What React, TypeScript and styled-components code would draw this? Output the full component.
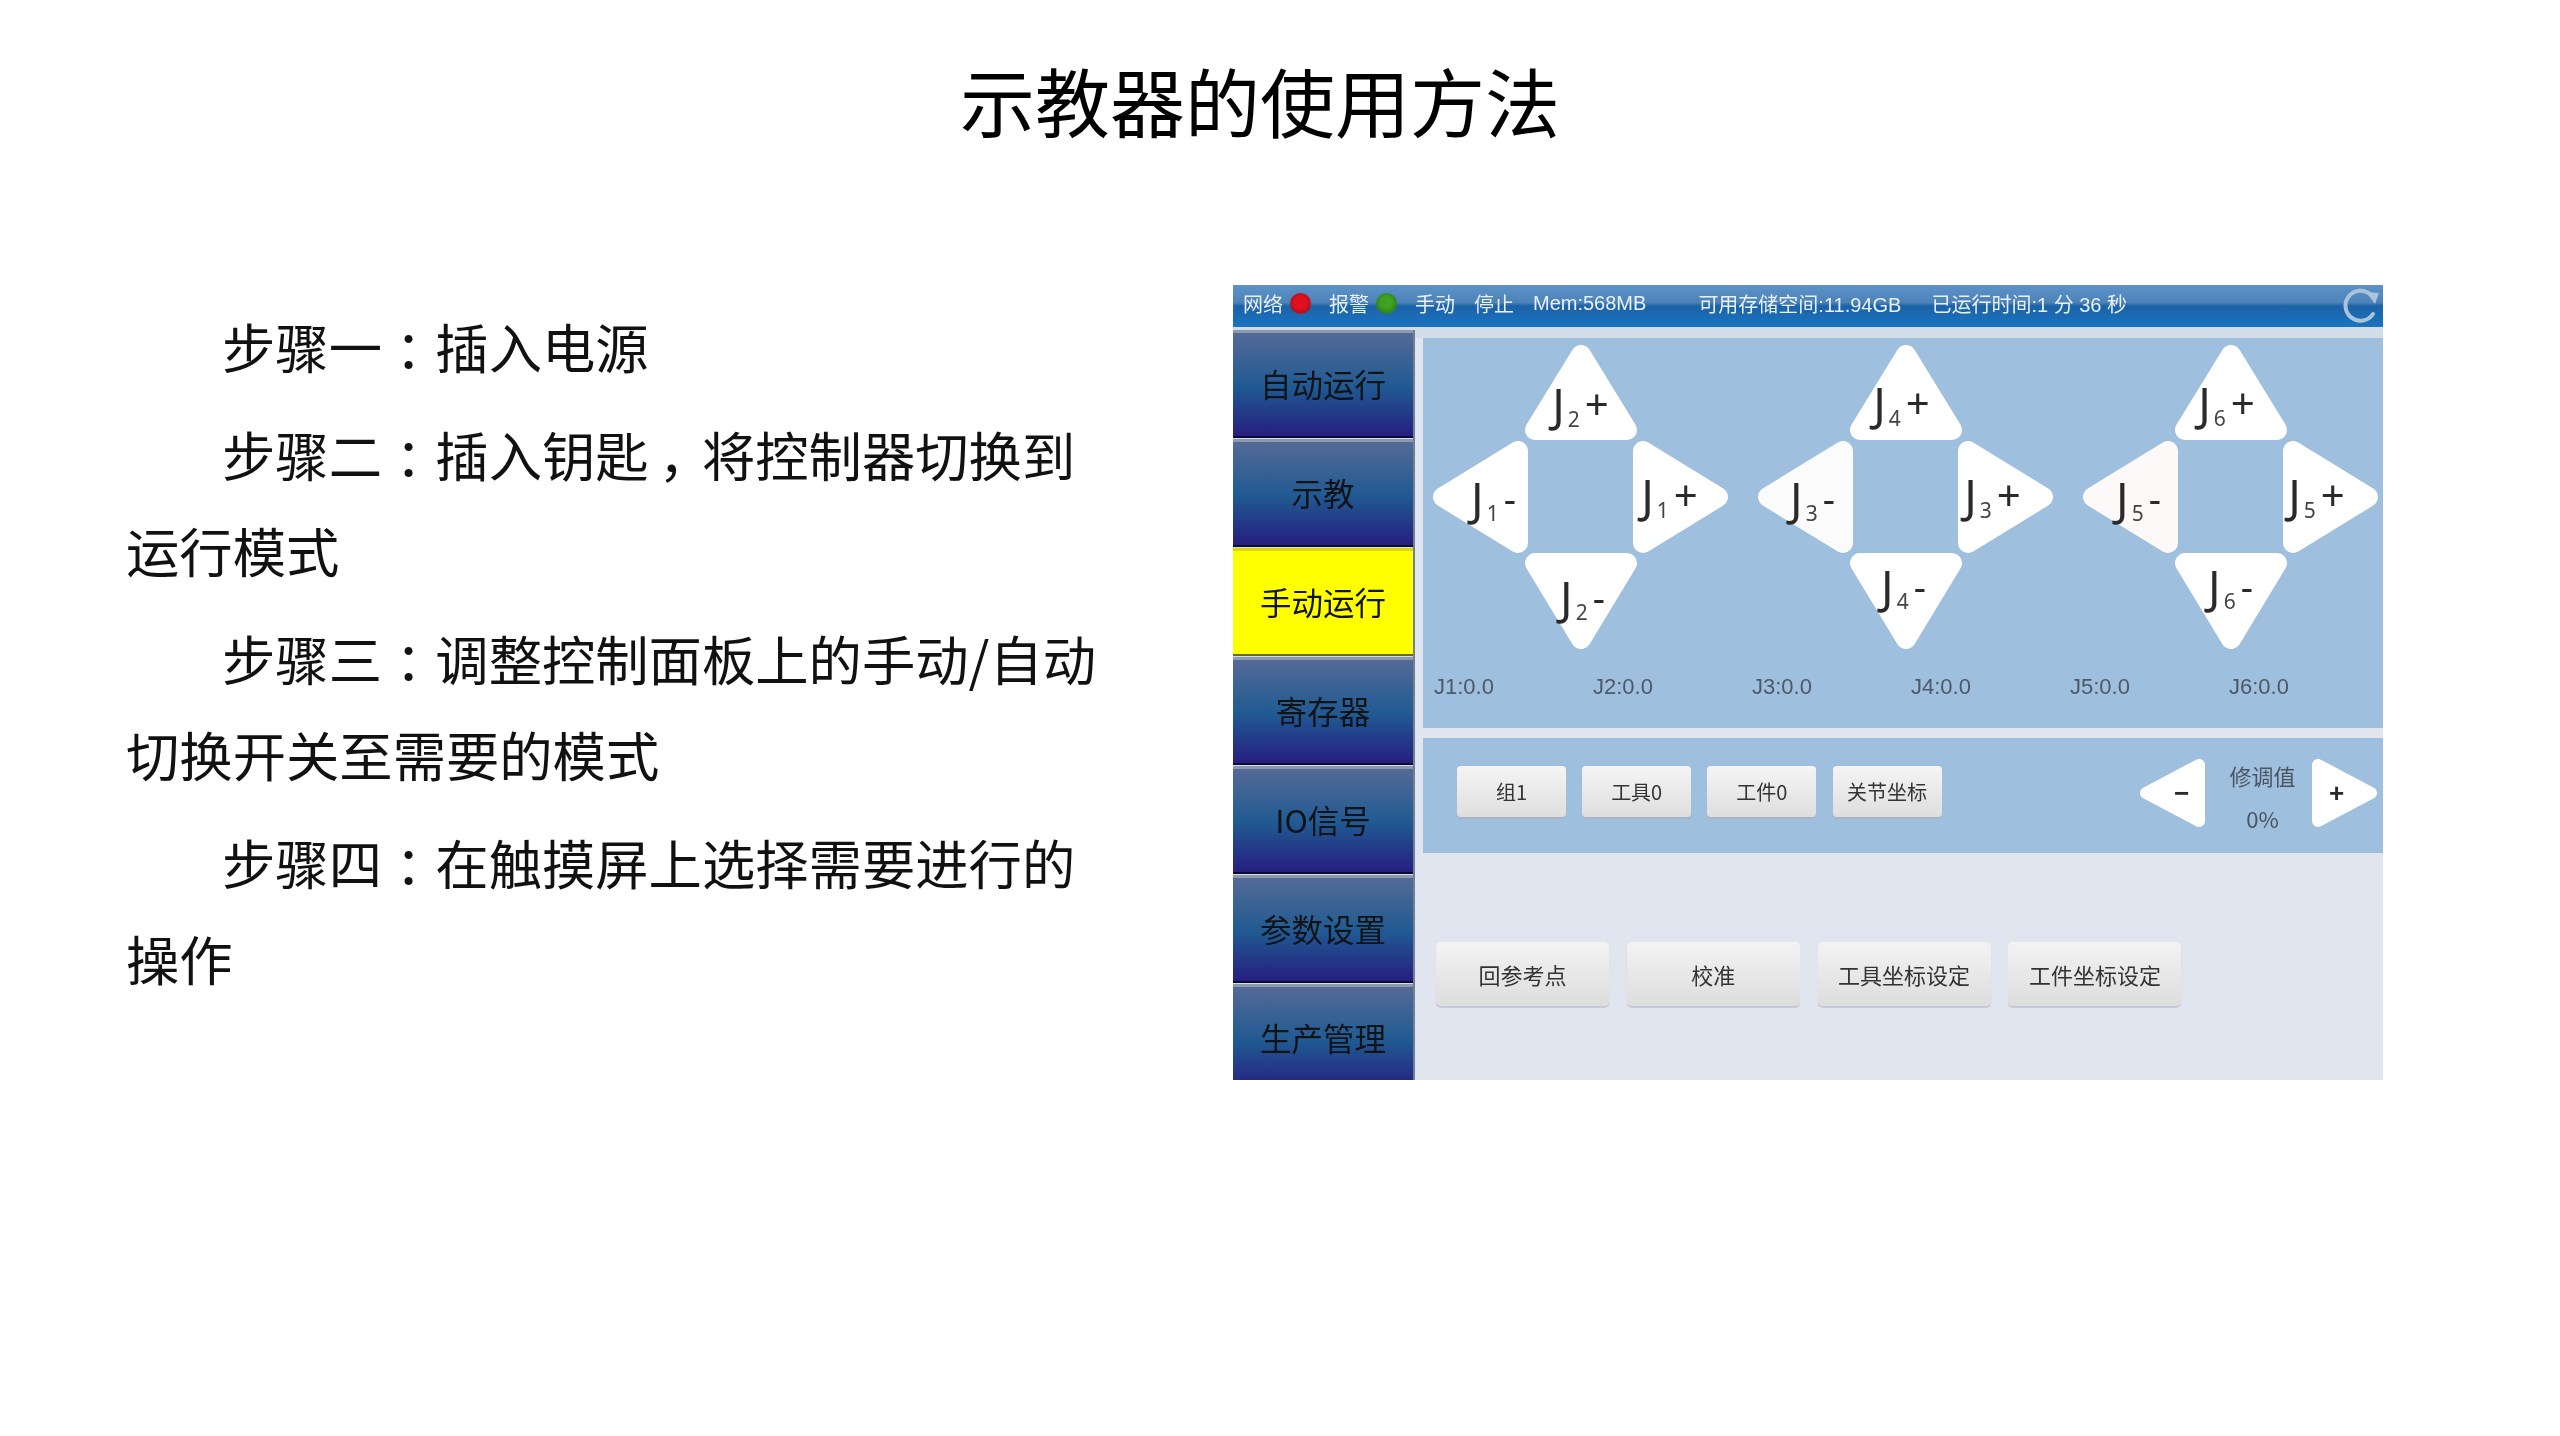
import React from "react"
import styled, { createGlobalStyle } from "styled-components"

const CJK = `"Noto Sans CJK SC", "Noto Sans", sans-serif`

const GlobalStyle = createGlobalStyle`
  html, body {
    margin: 0;
    padding: 0;
    background: #fff;
  }
`

const Slide = styled.div`
  width: 2560px;
  height: 1436px;
  overflow: hidden;
  background: #fff;
  font-family: ${CJK};
`

const Title = styled.h1`
  width: 2520px;
  margin: 0;
  padding-top: 50px;
  height: 100px;
  font-size: 75px;
  line-height: 100px;
  font-weight: 400;
  text-align: center;
  color: #000;
`

const Row = styled.div`
  display: flex;
  align-items: flex-start;
  margin-top: 135px;
  padding-left: 126px;
`

const Steps = styled.div`
  flex: 0 0 990px;
  margin-right: 117px;
  padding-top: 13px;
`

const Step = styled.p`
  margin: 0 0 12px;
  text-indent: 96px;
  font-size: 53.33px;
  line-height: 96px;
  color: #111;
`

// colon and comma sit in the middle of their cell on the slide
const Punct = styled.span`
  display: inline-block;
  width: 1em;
  text-indent: 0;
  text-align: center;
  font-feature-settings: "palt";
`

const Screen = styled.div`
  width: 1150px;
  height: 795px;
  overflow: hidden;
  display: flex;
  flex-direction: column;
  filter: blur(0.5px);
  font-family: ${CJK};
`

const StatusBar = styled.div`
  flex: 0 0 42px;
  position: relative;
  display: flex;
  align-items: center;
  padding: 0 0 5px 10px;
  box-sizing: border-box;
  font-family: "Liberation Sans", "Noto Sans CJK SC", sans-serif;
  font-size: 20px;
  color: #e8f0f8;
  background: linear-gradient(
    180deg,
    #5c93c8 0%,
    #4c82b8 42%,
    #1c62a6 50%,
    #1a74c2 100%
  );
`

const StatusItem = styled.span<{ $gap: number }>`
  margin-left: ${(p) => p.$gap}px;
  white-space: nowrap;
`

const Led = styled.span<{ $color: string; $dark: string }>`
  width: 21px;
  height: 21px;
  margin-left: 7px;
  border-radius: 50%;
  background: radial-gradient(circle at 50% 45%, ${(p) => p.$color} 35%, ${(p) => p.$dark} 100%);
`

const RefreshIcon = styled.svg`
  position: absolute;
  right: 3px;
  top: 2px;
`

const Body = styled.div`
  flex: 1;
  min-height: 0;
  display: flex;
  background: #d3dde9;
`

const Sidebar = styled.div`
  flex: 0 0 180px;
  display: flex;
  flex-direction: column;
  gap: 1px;
  margin-top: 3px;
  border-right: 2px solid #6f8096;
`

const NavButton = styled.div<{ $active?: boolean }>`
  flex: 0 0 108px;
  display: flex;
  align-items: center;
  justify-content: center;
  box-sizing: border-box;
  padding-bottom: 3px;
  font-size: 31.5px;
  color: #101418;
  border-top: 3px solid ${(p) => (p.$active ? "#d8d800" : "#8c9ab0")};
  border-bottom: 2px solid ${(p) => (p.$active ? "#6a6a10" : "#0c0c30")};
  background: ${(p) =>
    p.$active
      ? "#ffff00"
      : "linear-gradient(180deg, #546a96 0%, #205a92 52%, #261e80 100%)"};
`

const Content = styled.div`
  flex: 1;
  min-width: 0;
  background: #e1e5ef;
  padding: 11px 0 0 8px;
  box-shadow: inset 0 11px 0 #d3dde9;
`

const JointPanel = styled.div`
  height: 390px;
  background: #9fbfdf;
  padding: 7px 0 0 10px;
  box-sizing: border-box;
`

const PadRow = styled.div`
  display: flex;
  gap: 30px;
`

const Pad = styled.div`
  display: grid;
  grid-template-columns: 95px 105px 95px;
  grid-template-rows: 95px 113px 96px;
  justify-items: center;
  align-items: center;
`

const Tri = styled.div<{ $w: number; $h: number; $col: number; $row: number }>`
  position: relative;
  grid-column: ${(p) => p.$col};
  grid-row: ${(p) => p.$row};
  width: ${(p) => p.$w}px;
  height: ${(p) => p.$h}px;
  display: flex;
  align-items: center;
  justify-content: center;
  flex: none;
  margin: 0 -8px;
  svg {
    position: absolute;
    inset: 0;
  }
`

const JointLabel = styled.span<{ $dx: number; $dy: number }>`
  position: relative;
  display: inline-flex;
  align-items: baseline;
  transform: translate(${(p) => p.$dx}px, ${(p) => p.$dy}px);
  font-family: "Noto Sans", sans-serif;
  font-size: 46px;
  line-height: 46px;
  color: #2a2a2a;
`

const JointSub = styled.span`
  font-size: 21px;
  line-height: 18px;
  color: #444;
  margin: 0 5px 0 3px;
  transform: translateY(5px);
`

const JointSign = styled.span<{ $minus: boolean }>`
  font-size: ${(p) => (p.$minus ? 38 : 42)}px;
  transform: translateY(${(p) => (p.$minus ? -3 : -2)}px);
`

const Values = styled.div`
  display: grid;
  grid-template-columns: repeat(6, 159px);
  margin-top: 25px;
  padding-left: 1px;
  font-family: "Liberation Sans", sans-serif;
  font-size: 22px;
  line-height: 26px;
  color: #4d5966;
`

const ControlPanel = styled.div`
  margin-top: 10px;
  height: 115px;
  background: #9fbfdf;
  display: flex;
  justify-content: space-between;
  padding: 0 6px 0 34px;
`

const ToolRow = styled.div`
  display: flex;
  gap: 16.2px;
  margin-top: 28px;
`

const ToolButton = styled.div`
  width: 109px;
  height: 51px;
  display: flex;
  align-items: center;
  justify-content: center;
  border-radius: 4px;
  font-size: 20px;
  color: #333;
  background: linear-gradient(180deg, #f5f5f5 0%, #dedede 100%);
  box-shadow: 0 2px 1px #a9b4c2;
`

const Tune = styled.div`
  display: flex;
  margin-top: 21px;
`

const TuneArrow = styled.div`
  position: relative;
  width: 65px;
  height: 68px;
  display: flex;
  align-items: center;
  justify-content: center;
  svg {
    position: absolute;
    inset: 0;
  }
`

const TuneSign = styled.span<{ $dx: number }>`
  position: relative;
  font-family: "Liberation Sans", sans-serif;
  font-weight: 700;
  font-size: 26px;
  color: #2a2a2a;
  transform: translateX(${(p) => p.$dx}px);
`

const TuneValue = styled.div`
  width: 107px;
  box-sizing: border-box;
  padding-left: 8px;
  display: flex;
  flex-direction: column;
  align-items: center;
  gap: 13px;
  padding-top: 1px;
  font-size: 22px;
  line-height: 30px;
  color: #4a5560;
`

const ActionRow = styled.div`
  display: flex;
  gap: 17.8px;
  margin: 89px 0 0 13px;
`

const ActionButton = styled.div`
  width: 173px;
  height: 64px;
  display: flex;
  align-items: center;
  justify-content: center;
  border-radius: 5px;
  font-size: 22px;
  color: #333;
  background: linear-gradient(180deg, #f3f3f3 0%, #dddddd 100%);
  box-shadow: 0 2px 1px #c3c8d2;
`

type Dir = "up" | "down" | "left" | "right"

// triangle with round corners: the stroke gives the radius
const TriShape = ({ dir, w, h, r = 10, fill = "#fff" }: { dir: Dir; w: number; h: number; r?: number; fill?: string }) => {
  const points = {
    up: `${r},${h - r} ${w - r},${h - r} ${w / 2},${r}`,
    down: `${r},${r} ${w - r},${r} ${w / 2},${h - r}`,
    left: `${w - r},${r} ${w - r},${h - r} ${r},${h / 2}`,
    right: `${r},${r} ${r},${h - r} ${w - r},${h / 2}`,
  }[dir]
  return (
    <svg width={w} height={h} viewBox={`0 0 ${w} ${h}`}>
      <polygon points={points} fill={fill} stroke={fill} strokeWidth={r * 2} strokeLinejoin="round" />
    </svg>
  )
}

type Arrow = { n: number; sign: "+" | "-"; dx: number; dy: number; fill?: string }
type PadData = Record<Dir, Arrow>

const PADS: PadData[] = [
  {
    up: { n: 2, sign: "+", dx: 0, dy: 12 },
    left: { n: 1, sign: "-", dx: 13, dy: 3 },
    right: { n: 1, sign: "+", dx: -11, dy: -1 },
    down: { n: 2, sign: "-", dx: 2, dy: -3 },
  },
  {
    up: { n: 4, sign: "+", dx: -4, dy: 11 },
    left: { n: 3, sign: "-", dx: 7, dy: 3, fill: "#fbfbfb" },
    right: { n: 3, sign: "+", dx: -13, dy: -1 },
    down: { n: 4, sign: "-", dx: -2, dy: -14 },
  },
  {
    up: { n: 6, sign: "+", dx: -4, dy: 11 },
    left: { n: 5, sign: "-", dx: 8, dy: 3, fill: "#fdf9f9" },
    right: { n: 5, sign: "+", dx: -14, dy: -1 },
    down: { n: 6, sign: "-", dx: 0, dy: -14 },
  },
]

const PLACE: Record<Dir, { col: number; row: number; w: number; h: number }> = {
  up: { col: 2, row: 1, w: 112, h: 95 },
  down: { col: 2, row: 3, w: 112, h: 96 },
  left: { col: 1, row: 2, w: 95, h: 112 },
  right: { col: 3, row: 2, w: 95, h: 112 },
}

const JointArrow = ({ dir, arrow }: { dir: Dir; arrow: Arrow }) => {
  const { col, row, w, h } = PLACE[dir]
  return (
    <Tri $col={col} $row={row} $w={w} $h={h}>
      <TriShape dir={dir} w={w} h={h} fill={arrow.fill} />
      <JointLabel $dx={arrow.dx} $dy={arrow.dy}>
        J<JointSub>{arrow.n}</JointSub>
        <JointSign $minus={arrow.sign === "-"}>{arrow.sign}</JointSign>
      </JointLabel>
    </Tri>
  )
}

const NAV_ITEMS = ["自动运行", "示教", "手动运行", "寄存器", "IO信号", "参数设置", "生产管理"]
const TOOLS = ["组1", "工具0", "工件0", "关节坐标"]
const ACTIONS = ["回参考点", "校准", "工具坐标设定", "工件坐标设定"]
const DIRS: Dir[] = ["up", "left", "right", "down"]

const App = () => (
  <Slide>
    <GlobalStyle />
    <Title>示教器的使用方法</Title>
    <Row>
      <Steps>
        <Step>
          步骤一<Punct>：</Punct>插入电源
        </Step>
        <Step>
          步骤二<Punct>：</Punct>插入钥匙<Punct>，</Punct>将控制器切换到
          <br />
          运行模式
        </Step>
        <Step>
          步骤三<Punct>：</Punct>调整控制面板上的手动/自动
          <br />
          切换开关至需要的模式
        </Step>
        <Step>
          步骤四<Punct>：</Punct>在触摸屏上选择需要进行的
          <br />
          操作
        </Step>
      </Steps>
      <Screen>
        <StatusBar>
          <StatusItem $gap={0}>网络</StatusItem>
          <Led $color="#e01020" $dark="#901018" />
          <StatusItem $gap={18}>报警</StatusItem>
          <Led $color="#40a020" $dark="#206a18" />
          <StatusItem $gap={18}>手动</StatusItem>
          <StatusItem $gap={19}>停止</StatusItem>
          <StatusItem $gap={19}>Mem:568MB</StatusItem>
          <StatusItem $gap={52}>可用存储空间:11.94GB</StatusItem>
          <StatusItem $gap={30}>已运行时间:1 分 36 秒</StatusItem>
          <RefreshIcon width="38" height="38" viewBox="0 0 38 38">
            <path
              d="M31 27 A15 15 0 1 1 29 8"
              fill="none"
              stroke="#a9c3da"
              strokeWidth="4"
              strokeLinecap="round"
            />
            <polygon points="24,5 37,6 33,17" fill="#a9c3da" />
          </RefreshIcon>
        </StatusBar>
        <Body>
          <Sidebar>
            {NAV_ITEMS.map((item) => (
              <NavButton key={item} $active={item === "手动运行"}>
                {item}
              </NavButton>
            ))}
          </Sidebar>
          <Content>
            <JointPanel>
              <PadRow>
                {PADS.map((pad, i) => (
                  <Pad key={i}>
                    {DIRS.map((dir) => (
                      <JointArrow key={dir} dir={dir} arrow={pad[dir]} />
                    ))}
                  </Pad>
                ))}
              </PadRow>
              <Values>
                {[1, 2, 3, 4, 5, 6].map((n) => (
                  <span key={n}>J{n}:0.0</span>
                ))}
              </Values>
            </JointPanel>
            <ControlPanel>
              <ToolRow>
                {TOOLS.map((tool) => (
                  <ToolButton key={tool}>{tool}</ToolButton>
                ))}
              </ToolRow>
              <Tune>
                <TuneArrow>
                  <TriShape dir="left" w={65} h={68} r={6} />
                  <TuneSign $dx={9}>−</TuneSign>
                </TuneArrow>
                <TuneValue>
                  <span>修调值</span>
                  <span>0%</span>
                </TuneValue>
                <TuneArrow>
                  <TriShape dir="right" w={65} h={68} r={6} />
                  <TuneSign $dx={-8}>+</TuneSign>
                </TuneArrow>
              </Tune>
            </ControlPanel>
            <ActionRow>
              {ACTIONS.map((action) => (
                <ActionButton key={action}>{action}</ActionButton>
              ))}
            </ActionRow>
          </Content>
        </Body>
      </Screen>
    </Row>
  </Slide>
)

export default App
